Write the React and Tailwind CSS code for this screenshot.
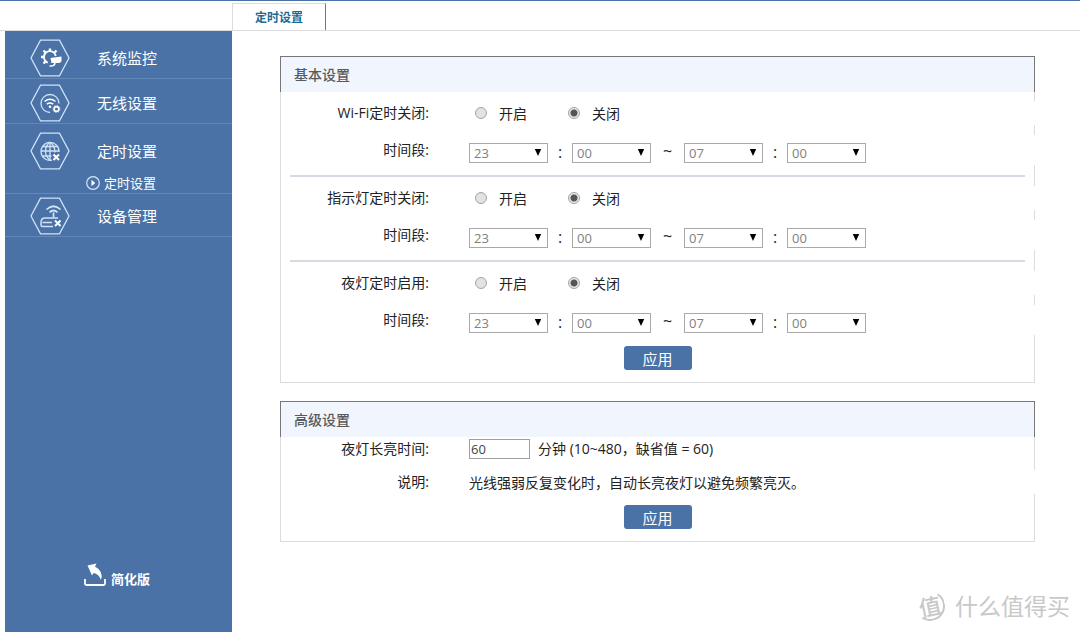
import { useState } from "react"

const HOURS = Array.from({ length: 24 }, (_, i) => String(i).padStart(2, "0"))
const MINUTES = Array.from({ length: 60 }, (_, i) => String(i).padStart(2, "0"))

const TIMERS = [
  { id: "wifi", label: "Wi-Fi定时关闭:" },
  { id: "led", label: "指示灯定时关闭:" },
  { id: "night", label: "夜灯定时启用:" },
]

function HexIcon({ children }) {
  return (
    <svg viewBox="0 0 40 38" className="h-[38px] w-10 shrink-0" fill="none" stroke="#cfe2f8" strokeWidth="1.3">
      <path d="M10.5 1.2h19L39 19l-9.5 17.8h-19L1 19z" />
      {children}
    </svg>
  )
}

function MonitorIcon() {
  return (
    <HexIcon>
      <path d="M25.8 17a6 6 0 1 0-8 6.700" stroke="#fff" strokeWidth="1.700" />
      <path
        d="M20 12V9.500M15.500 13.500L13.500 11.500M13.500 18H11M15.500 22.500L13.500 24.500M24.500 13.500L26.500 11.500"
        stroke="#fff"
        strokeWidth="2.400"
      />
      <path d="M20.500 19l11-1.500v4.500q-.5 2-3 2h-7z" fill="#fff" stroke="none" />
      <path d="M25 23.500q0 4-5.500 3.500" stroke="#fff" strokeWidth="1.600" />
    </HexIcon>
  )
}

function WirelessIcon() {
  return (
    <HexIcon>
      <path d="M20 28.500a9 9 0 1 1 9-9" />
      <path d="M14.500 17.500q5.500-4.500 11 0M16.800 20.200q3.200-2.600 6.400 0" stroke="#fff" strokeWidth="1.500" />
      <circle cx="20" cy="22.800" r="1.300" fill="#fff" stroke="none" />
      <circle cx="26.500" cy="25" r="2.400" stroke="#fff" strokeWidth="1.700" />
      <circle cx="26.500" cy="25" r="3.600" strokeWidth="0.900" strokeDasharray="1.200 1.600" />
    </HexIcon>
  )
}

function TimerIcon() {
  return (
    <HexIcon>
      <path d="M22 28.200a9 9 0 1 1 7-8.200" />
      <path d="M20 10v18M11 19h18M13 14.500h14M13 24h8.500" />
      <path d="M20 10.300c-6 4-6 13.400 0 17.700M20 10.300c4 3 5.200 6 4.800 10.200" />
      <path d="M23.500 22.500l5.500 5.500M29 22.500L23.500 28" stroke="#fff" strokeWidth="2" />
    </HexIcon>
  )
}

function DeviceIcon() {
  return (
    <HexIcon>
      <path d="M16.500 12.500q7-6.500 14 0M19.500 15.300q4-3.600 8 0" strokeWidth="1.700" />
      <path d="M23.500 15.500v5" strokeWidth="1.700" />
      <path d="M23 29.500H12.500q-1.500 0-1.500-1.500v-2.500q0-4.500 4-4.500h13M12.500 25.500H22" strokeWidth="1.500" />
      <path d="M25 23.500l5.500 5.500M30.500 23.500L25 29" stroke="#fff" strokeWidth="2" />
    </HexIcon>
  )
}

function MenuItem({ icon, label }) {
  return (
    <a href="#" className="flex items-center pl-[25px] text-[15px] leading-5 text-white">
      {icon}
      <span className="ml-[27px]">{label}</span>
    </a>
  )
}

function Sidebar() {
  return (
    <nav className="flex w-[227px] shrink-0 flex-col bg-[#4a72a6]">
      <div className="h-12 border-b border-[#6388b8] pt-2">
        <MenuItem icon={<MonitorIcon />} label="系统监控" />
      </div>
      <div className="h-[45px] border-b border-[#6388b8] pt-[5px]">
        <MenuItem icon={<WirelessIcon />} label="无线设置" />
      </div>
      <div className="h-[70px] border-b border-[#6388b8] pt-2">
        <MenuItem icon={<TimerIcon />} label="定时设置" />
        <a href="#" className="mt-[3px] flex items-center gap-1 pl-[81px] text-[13px] leading-5 text-white">
          <svg viewBox="0 0 14 14" className="h-3.5 w-3.5" fill="none" stroke="#d6e6f8" strokeWidth="1.2">
            <circle cx="7" cy="7" r="6.3" />
            <path d="M5.500 3.800L9.200 7 5.500 10.200z" fill="#fff" stroke="none" />
          </svg>
          定时设置
        </a>
      </div>
      <div className="h-[43px] border-b border-[#6388b8] pt-[3px]">
        <MenuItem icon={<DeviceIcon />} label="设备管理" />
      </div>
      <a href="#" className="mt-auto mb-[43px] flex items-end gap-1 pl-[78px] text-[13px] leading-5 font-bold text-white">
        <svg viewBox="0 0 24 24" className="mb-0.5 h-6 w-6" fill="none">
          <path d="M2 16v4.500q0 1.500 1.500 1.500h17q1.500 0 1.500-1.500V16" stroke="#fff" strokeWidth="1.8" />
          <path d="M4.500 2.500L13.500.5l-1.500 3q9 5 6 13.500-2-6-7.500-7L9 12.500z" fill="#fff" />
        </svg>
        简化版
      </a>
    </nav>
  )
}

function TimeSelect({ label, options, value, onChange, disabled }) {
  return (
    <span className="relative inline-flex">
      <select
        aria-label={label}
        value={value}
        disabled={disabled}
        onChange={(e) => onChange(e.target.value)}
        className="h-5 w-[79px] appearance-none border border-[#a9a9a9] bg-white pl-1 text-[13px] leading-4 text-[#808080]"
      >
        {options.map((o) => (
          <option key={o}>{o}</option>
        ))}
      </select>
      <svg viewBox="0 0 8 7" className="pointer-events-none absolute top-[6px] right-1.5 h-[7px] w-2" fill="#000">
        <path d="M0.800 0h6.400L4 7z" />
      </svg>
    </span>
  )
}

function Radio({ name, label, checked, onChange }) {
  return (
    <label className="flex items-center gap-3">
      <input
        type="radio"
        name={name}
        checked={checked}
        onChange={onChange}
        className="h-3 w-3 appearance-none rounded-full border border-[#a5a5a5] bg-[#e2e2e2] checked:bg-[radial-gradient(circle,#555_0_3px,#e8e8e8_4px)]"
      />
      <span>{label}</span>
    </label>
  )
}

// Rows cover the panel's right border, so it shows only between them.
function Row({ label, className, children }) {
  return (
    <div className={`relative -mr-px flex bg-white ${className}`}>
      <span className="flex w-[148px] shrink-0 items-center justify-end pb-0.5">{label}</span>
      <div className="ml-10 flex items-center">{children}</div>
    </div>
  )
}

function TimerGroup({ id, label }) {
  const [enabled, setEnabled] = useState(false)
  const [range, setRange] = useState(["23", "00", "07", "00"])

  const update = (index) => (value) => setRange(range.map((v, i) => (i === index ? value : v)))

  return (
    <div role="group" aria-label={label} className="pt-[9px]">
      <Row label={label} className="h-6">
        <div className="flex gap-[41px] pl-[6px]">
          <Radio name={id} label="开启" checked={enabled} onChange={() => setEnabled(true)} />
          <Radio name={id} label="关闭" checked={!enabled} onChange={() => setEnabled(false)} />
        </div>
      </Row>
      <Row label="时间段:" className="mt-[10px] h-[30px]">
        <div className="flex items-center pt-1.5 leading-5">
          <TimeSelect label="开始小时" options={HOURS} value={range[0]} onChange={update(0)} disabled={!enabled} />
          <span className="w-6 pb-0.5 text-center text-base leading-[18px]">:</span>
          <TimeSelect label="开始分钟" options={MINUTES} value={range[1]} onChange={update(1)} disabled={!enabled} />
          <span className="w-[33px] pb-1 text-center text-base leading-4">~</span>
          <TimeSelect label="结束小时" options={HOURS} value={range[2]} onChange={update(2)} disabled={!enabled} />
          <span className="w-6 pb-0.5 text-center text-base leading-[18px]">:</span>
          <TimeSelect label="结束分钟" options={MINUTES} value={range[3]} onChange={update(3)} disabled={!enabled} />
        </div>
      </Row>
    </div>
  )
}

function ApplyButton() {
  return (
    <button type="button" className="mx-auto block h-6 w-[68px] rounded-[3px] bg-[#4a72a6] pt-0.5 text-[15px] leading-[22px] text-white">
      应用
    </button>
  )
}

function Panel({ title, children }) {
  return (
    <section>
      <h2 className="h-9 border border-b-0 border-[#777] bg-[#f1f6fe] pl-[13px] text-[14px] leading-9 font-medium text-[#5a5a5a]">
        {title}
      </h2>
      <div className="border border-t-0 border-[#dcdcdc]">{children}</div>
    </section>
  )
}

export default function App() {
  const [duration, setDuration] = useState("60")

  return (
    <div className="relative flex min-h-screen flex-col border-t border-[#4a72a6] bg-white font-['Open_Sans','Noto_Sans_CJK_SC',sans-serif] text-[14px] text-[#222] [font-variant-ligatures:none]">
      <header className="flex h-[30px] items-end border-b border-[#dcdcdc] pl-[232px]">
        <button
          type="button"
          className="h-[27px] w-[94px] border border-b-0 border-[#dcdcdc] border-r-[#777] bg-white pt-0.5 text-[12px] font-bold text-[#1d6a92]"
        >
          定时设置
        </button>
      </header>

      <div className="flex flex-1 pl-[5px]">
        <Sidebar />
        <main className="flex-1 pt-[25px] pr-[45px] pl-12">
          <Panel title="基本设置">
            {TIMERS.map((timer, i) => (
              <div key={timer.id}>
                {i > 0 && <hr className="mx-[9px] mt-[10px] border-t-2 border-[#d6dae2]" />}
                <TimerGroup id={timer.id} label={timer.label} />
              </div>
            ))}
            <div className="pt-[11px] pb-3">
              <ApplyButton />
            </div>
          </Panel>

          <div className="mt-[18px]">
            <Panel title="高级设置">
              <div className="flex h-6">
                <label htmlFor="duration" className="w-[148px] shrink-0 text-right leading-6">
                  夜灯长亮时间:
                </label>
                <div className="ml-10 flex items-center">
                  <input
                    id="duration"
                    type="text"
                    value={duration}
                    onChange={(e) => setDuration(e.target.value)}
                    className="h-5 w-[61px] border border-[#a0a0a0] px-px text-[13px] text-[#444]"
                  />
                  <span className="ml-2 leading-5">分钟 (10~480，缺省值 = 60)</span>
                </div>
              </div>
              <Row label="说明:" className="mt-[9px] h-6">
                光线强弱反复变化时，自动长亮夜灯以避免频繁亮灭。
              </Row>
              <div className="pt-[11px] pb-3">
                <ApplyButton />
              </div>
            </Panel>
          </div>
        </main>
      </div>

      <div className="absolute right-2.5 bottom-2.5 flex items-center gap-2.5 text-[23px] leading-8 text-[#c8c8c8]">
        <span className="flex h-[30px] w-[30px] -rotate-12 items-center justify-center rounded-full border-2 border-[#c8c8c8] border-t-transparent border-l-transparent text-[22px] font-medium">
          值
        </span>
        什么值得买
      </div>
    </div>
  )
}
